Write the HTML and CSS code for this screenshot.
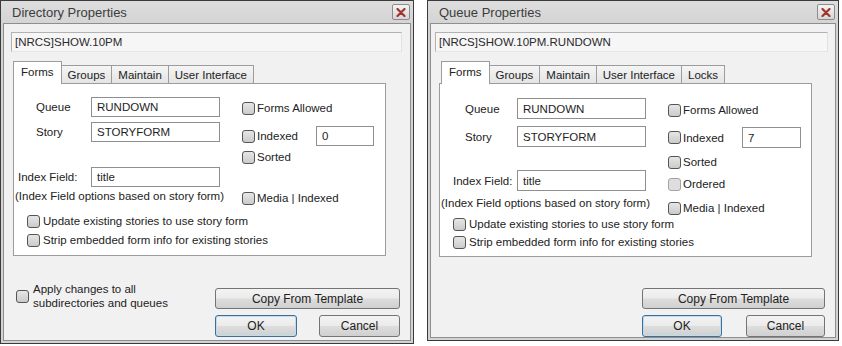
FILE: index.html
```html
<!DOCTYPE html>
<html>
<head>
<meta charset="utf-8">
<title>Properties</title>
<link rel="stylesheet" href="styles.css">
</head>
<body>
<div class="screen">
  <div class="dialog dir">
    <div class="titlebar">
      <span class="title">Directory Properties</span>
      <button class="close"><svg width="10" height="9" viewBox="0 0 10 9"><path d="M1.5 1 L8.5 8 M8.5 1 L1.5 8" stroke="#a2342e" stroke-width="2.2" stroke-linecap="round"/></svg></button>
    </div>
    <div class="client">
      <div class="pathbox">[NRCS]SHOW.10PM</div>
      <div class="tabs">
        <div class="tab active">Forms</div>
        <div class="tab">Groups</div>
        <div class="tab">Maintain</div>
        <div class="tab">User Interface</div>
      </div>
      <div class="panel">
        <div class="panel-top">
          <div class="fields">
            <div class="field r-queue"><span class="label l-short">Queue</span><div class="input">RUNDOWN</div></div>
            <div class="field r-story"><span class="label l-short">Story</span><div class="input">STORYFORM</div></div>
            <div class="field r-index"><span class="label l-index">Index Field:</span><div class="input">title</div></div>
            <div class="hint">(Index Field options based on story form)</div>
          </div>
          <div class="flags">
            <div class="check f-allowed"><span class="box"></span>Forms Allowed</div>
            <div class="check f-indexed"><span class="box"></span><span class="lbl">Indexed</span><div class="input small">0</div></div>
            <div class="check f-sorted"><span class="box"></span>Sorted</div>
            <div class="check f-media"><span class="box"></span>Media | Indexed</div>
          </div>
        </div>
        <div class="check wide c-update"><span class="box"></span>Update existing stories to use story form</div>
        <div class="check wide c-strip"><span class="box"></span>Strip embedded form info for existing stories</div>
      </div>
      <div class="footer">
        <div class="apply"><span class="box"></span><span class="apply-text">Apply changes to all<br>subdirectories and queues</span></div>
        <div class="actions">
          <button class="btn">Copy From Template</button>
          <div class="btn-row">
            <button class="btn ok">OK</button>
            <button class="btn cancel">Cancel</button>
          </div>
        </div>
      </div>
    </div>
  </div>

  <div class="dialog queue">
    <div class="titlebar">
      <span class="title">Queue Properties</span>
      <button class="close"><svg width="10" height="9" viewBox="0 0 10 9"><path d="M1.5 1 L8.5 8 M8.5 1 L1.5 8" stroke="#a2342e" stroke-width="2.2" stroke-linecap="round"/></svg></button>
    </div>
    <div class="client">
      <div class="pathbox">[NRCS]SHOW.10PM.RUNDOWN</div>
      <div class="tabs">
        <div class="tab active">Forms</div>
        <div class="tab">Groups</div>
        <div class="tab">Maintain</div>
        <div class="tab">User Interface</div>
        <div class="tab">Locks</div>
      </div>
      <div class="panel">
        <div class="panel-top">
          <div class="fields">
            <div class="field r-queue"><span class="label l-short">Queue</span><div class="input">RUNDOWN</div></div>
            <div class="field r-story"><span class="label l-short">Story</span><div class="input">STORYFORM</div></div>
            <div class="field r-index"><span class="label l-index">Index Field:</span><div class="input">title</div></div>
            <div class="hint">(Index Field options based on story form)</div>
          </div>
          <div class="flags">
            <div class="check f-allowed"><span class="box"></span>Forms Allowed</div>
            <div class="check f-indexed"><span class="box"></span><span class="lbl">Indexed</span><div class="input small">7</div></div>
            <div class="check f-sorted"><span class="box"></span>Sorted</div>
            <div class="check f-ordered"><span class="box off"></span>Ordered</div>
            <div class="check f-media"><span class="box"></span>Media | Indexed</div>
          </div>
        </div>
        <div class="check wide c-update"><span class="box"></span>Update existing stories to use story form</div>
        <div class="check wide c-strip"><span class="box"></span>Strip embedded form info for existing stories</div>
      </div>
      <div class="footer">
        <div class="actions">
          <button class="btn">Copy From Template</button>
          <div class="btn-row">
            <button class="btn ok">OK</button>
            <button class="btn cancel">Cancel</button>
          </div>
        </div>
      </div>
    </div>
  </div>
</div>
</body>
</html>
```

FILE: styles.css
```css
* { box-sizing: border-box; }

body {
  margin: 0;
  background: #ffffff;
  font-family: "Liberation Sans", Arial, sans-serif;
  font-size: 11.5px;
  color: #222222;
}

.screen {
  display: flex;
  align-items: flex-start;
  gap: 13px;
}

/* window frame */
.dialog {
  display: flex;
  flex-direction: column;
  border: 1px solid #3b3b3b;
  background: linear-gradient(#dedede, #d3d3d3 24px, #d3d3d3);
  padding: 0 2px 2px;
}
.dir { width: 414px; height: 344px; }
.queue { width: 412px; height: 341px; }

.titlebar {
  flex: none;
  height: 22px;
  display: flex;
  align-items: center;
  justify-content: space-between;
  padding: 0 1px 0 9px;
}
.title {
  font-family: "Liberation Sans", Arial, sans-serif;
  font-size: 13px;
  color: #3c3c3c;
}
.close {
  width: 18px;
  height: 16px;
  padding: 0;
  border: 1px solid #8c8c8c;
  border-radius: 2px;
  background: linear-gradient(#f4f4f4, #d6d6d6);
  display: flex;
  align-items: center;
  justify-content: center;
}

.client {
  flex: 1;
  display: flex;
  flex-direction: column;
  border: 1px solid #8e8e8e;
  background: #f2f1f2;
  padding-top: 8px;
}

.pathbox {
  height: 20px;
  border: 1px solid #b2b2b2;
  border-right-color: #e2e2e2;
  border-bottom-color: #e6e6e6;
  background: #f7f6f7;
  padding-left: 3px;
  display: flex;
  align-items: center;
  color: #2a2a2a;
}
.dir .pathbox { margin-left: 7px; width: 391px; }
.queue .pathbox { margin-left: 4px; width: 393px; }

/* tabs */
.tabs {
  display: flex;
  align-items: flex-end;
  height: 23px;
  margin-top: 9px;
  margin-bottom: -1px;
  position: relative;
  z-index: 1;
}
.dir .tabs { margin-left: 10px; }
.queue .tabs { margin-left: 11px; }

.tab {
  height: 18px;
  margin-bottom: 1px;
  margin-left: -1px;
  padding: 0 6px;
  border: 1px solid #9c9c9c;
  border-bottom: none;
  background: linear-gradient(#f5f5f5, #e4e4e4);
  display: flex;
  align-items: center;
  white-space: nowrap;
}
.tab.active {
  height: 23px;
  margin-bottom: 0;
  padding: 0 7px 3px;
  background: #ffffff;
  position: relative;
  z-index: 2;
}

/* tab page */
.panel {
  width: 373px;
  border: 1px solid #9c9c9c;
  background: #ffffff;
}
.dir .panel { margin-left: 9px; padding-bottom: 8px; }
.queue .panel { margin-left: 8px; padding-bottom: 7px; }

.panel-top { display: flex; }

.fields {
  flex: none;
  width: 228px;
  display: flex;
  flex-direction: column;
}
.field {
  display: flex;
  align-items: center;
}
.label {
  flex: none;
  width: 77px;
  white-space: nowrap;
}
.input {
  flex: none;
  width: 129px;
  height: 20px;
  border: 1px solid #8f8f8f;
  background: #ffffff;
  padding-left: 5px;
  display: flex;
  align-items: center;
  color: #1e1e1e;
}
.input.small { width: 58px; }
.queue .input { height: 21px; }
.queue .input.small { width: 59px; }

.hint {
  line-height: 14px;
  padding-left: 1px;
  white-space: nowrap;
}

.flags {
  display: flex;
  flex-direction: column;
}

.check {
  display: flex;
  align-items: center;
  height: 14px;
  white-space: nowrap;
}
.check.f-indexed { height: auto; }
.check .lbl { width: 59px; }
.check.wide { padding-left: 13px; }
.check.wide .box { margin-right: 3px; }

.box {
  flex: none;
  width: 13px;
  height: 13px;
  margin-right: 2px;
  border: 1px solid #555555;
  border-radius: 3px;
  background: linear-gradient(#e6e6e6, #cbcbcb);
}
.box.off {
  border-color: #a4a4a4;
  background: #dedede;
}

/* Directory dialog spacing */
.dir .fields { padding-top: 13px; }
.dir .l-short { padding-left: 22px; }
.dir .l-index { padding-left: 4px; }
.dir .r-story { margin-top: 5px; }
.dir .r-index { margin-top: 25px; }
.dir .hint { margin-top: 2px; }
.dir .flags { padding-top: 17px; }
.dir .f-indexed { margin-top: 11px; }
.dir .f-sorted { margin-top: 4px; }
.dir .f-media { margin-top: 27px; }
.dir .c-update { margin-top: 9px; }
.dir .c-strip { margin-top: 5px; }

/* Queue dialog spacing */
.queue .fields { padding-top: 14px; }
.queue .l-short { padding-left: 25px; }
.queue .l-index { padding-left: 13px; }
.queue .r-story { margin-top: 7px; }
.queue .r-index { margin-top: 23px; }
.queue .hint { margin-top: 5px; }
.queue .flags { padding-top: 19px; }
.queue .f-indexed { margin-top: 10px; }
.queue .f-sorted { margin-top: 7px; }
.queue .f-ordered { margin-top: 8px; }
.queue .f-media { margin-top: 10px; }
.queue .c-update { margin-top: 2px; }
.queue .c-strip { margin-top: 4px; }

/* footer */
.footer {
  flex: 1;
  display: flex;
  align-items: flex-start;
}
.apply {
  display: flex;
  align-items: center;
  margin-left: 12px;
  margin-top: 26px;
}
.apply .box { margin-right: 4px; }
.apply-text { line-height: 14px; }

.actions {
  margin-left: auto;
  margin-right: 10px;
  display: flex;
  flex-direction: column;
  gap: 6px;
}
.dir .actions { margin-top: 32px; width: 185px; }
.queue .actions { margin-top: 31px; width: 183px; }

.btn-row {
  display: flex;
  justify-content: space-between;
}

.btn {
  height: 21px;
  padding: 0;
  border: 1px solid #747474;
  border-radius: 3px;
  background: linear-gradient(#f3f3f3 0%, #ebebeb 48%, #dddddd 52%, #d0d0d0 100%);
  font-family: "Liberation Sans", Arial, sans-serif;
  font-size: 12px;
  color: #222222;
  display: flex;
  align-items: center;
  justify-content: center;
}
.btn-row .btn { height: 22px; }
.ok {
  width: 82px;
  border-color: #3d6f9a;
  box-shadow: inset 0 0 0 1px #bcdcef;
}
.cancel { width: 81px; }
.queue .ok { width: 80px; }
.queue .cancel { width: 79px; }
```
